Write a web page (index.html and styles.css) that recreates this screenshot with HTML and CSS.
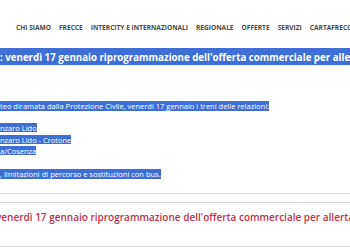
FILE: index.html
```html
<!DOCTYPE html>
<html lang="it">
<head>
    <meta charset="UTF-8">
    <meta name="viewport" content="width=device-width, initial-scale=1.0">
    <title>Infomobilità</title>
    <link rel="stylesheet" href="styles.css">
</head>
<body>
    <!-- Menu principale -->
    <nav class="menu">
        <a href="#">CHI SIAMO</a>
        <a href="#">FRECCE</a>
        <a href="#">INTERCITY E INTERNAZIONALI</a>
        <a href="#">REGIONALE</a>
        <a href="#">OFFERTE</a>
        <a href="#">SERVIZI</a>
        <a href="#">CARTAFRECCE</a>
    </nav>
    <div class="menu-bar"></div>

    <!-- Notizia selezionata -->
    <div class="news">
        <h1 class="news-title"><span class="sel">: venerdì 17 gennaio riprogrammazione dell'offerta commerciale per allerta meteo</span></h1>
        <p class="news-text"><span class="sel">teo diramata dalla Protezione Civile, venerdì 17 gennaio i treni delle relazioni:</span></p>
        <ul class="news-list">
            <li><a href="#" class="sel">nzaro Lido</a></li>
            <li><a href="#" class="sel">nzaro Lido - Crotone</a></li>
            <li><a href="#" class="sel">a/Cosenza</a></li>
        </ul>
        <p class="news-text"><span class="sel">, limitazioni di percorso e sostituzioni con bus.</span></p>
    </div>

    <!-- Elenco notizie -->
    <div class="list">
        <div class="list-item">
            <a href="#">venerdì 17 gennaio riprogrammazione dell'offerta commerciale per allerta meteo</a>
        </div>
    </div>
</body>
</html>
```

FILE: styles.css
```css
body {
    margin: 0;
    width: 350px;
    height: 250px;
    overflow: hidden;
    background-color: #ffffff;
    font-family: 'Open Sans', 'Liberation Sans', sans-serif;
    color: #333;
}
.menu {
    display: flex;
    gap: 8px;
    padding: 23px 0 0 16px;
    height: 14px;
    white-space: nowrap;
}
.menu a {
    color: #4a4a4a;
    font-size: 6.6px;
    font-weight: 700;
    text-decoration: none;
    flex-shrink: 0;
}
.menu-bar {
    margin-top: 11px;
    height: 2px;
    background-color: #3d6fd6;
}
.sel {
    background-color: #3d6fd6; /* testo selezionato */
    color: #ffffff;
}
.news {
    white-space: nowrap;
}
.news-title {
    margin: 0;
    padding-top: 1px;
    font-size: 9.7px;
    font-weight: 700;
    line-height: 14px;
    background-color: #3d6fd6;
}
.news-text {
    margin: 36px 0 0;
    font-size: 7.5px;
    line-height: 10px;
}
.news-list {
    list-style: none;
    margin: 12px 0 0;
    padding: 0;
    font-size: 7.5px;
    line-height: 11.5px;
}
.news-list a {
    text-decoration: underline;
}
.news-list + .news-text {
    margin-top: 11px;
}
.list {
    margin-top: 14px;
    border-top: 1px solid #d4d4d4;
    padding-top: 8px;
}
.list-item {
    border-top: 1px solid #d4d4d4;
    border-bottom: 1px solid #d4d4d4;
    padding: 6px 0 22px;
    margin-left: -4px;
    white-space: nowrap;
    line-height: 13px;
}
.list-item a {
    color: #c3304a;
    font-size: 10px;
    font-weight: 600;
    text-decoration: none;
}
```
